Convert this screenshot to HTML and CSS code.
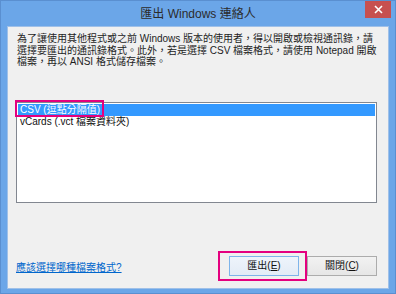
FILE: index.html
```html
<!DOCTYPE html>
<html lang="zh-Hant">
<head>
<meta charset="utf-8">
<title>匯出 Windows 連絡人</title>
<link rel="stylesheet" href="styles.css">
</head>
<body>
<div class="window">
  <div class="titlebar">
    <span class="spacer"></span>
    <span class="title">匯出 Windows 連絡人</span>
    <span class="close-btn"><svg width="9" height="9" viewBox="0 0 9 9"><path d="M1 1 L8 8 M8 1 L1 8" stroke="#fff" stroke-width="1.6" fill="none"/></svg></span>
  </div>
  <div class="client">
    <div class="desc">
      <div class="line">為了讓使用其他程式或之前 Windows 版本的使用者，得以開啟或檢視通訊錄，請</div>
      <div class="line">選擇要匯出的通訊錄格式。此外，若是選擇 CSV 檔案格式，請使用 Notepad 開啟</div>
      <div class="line">檔案，再以 ANSI 格式儲存檔案。</div>
    </div>
    <div class="listbox">
      <div class="item selected">CSV (逗點分隔值)</div>
      <div class="item">vCards (.vct 檔案資料夾)</div>
      <span class="highlight-list"></span>
    </div>
    <div class="footer">
      <a class="help-link" href="#">應該選擇哪種檔案格式?</a>
      <div class="highlight-btn">
        <button class="btn default">匯出(<u>E</u>)</button>
      </div>
      <button class="btn">關閉(<u>C</u>)</button>
    </div>
  </div>
</div>
</body>
</html>
```
FILE: styles.css
```css
* { box-sizing: border-box; }
html, body { margin: 0; padding: 0; }
body {
  width: 396px;
  height: 294px;
  overflow: hidden;
  font-family: "Liberation Sans", "Noto Sans CJK TC", sans-serif;
}
.window {
  width: 396px;
  height: 294px;
  background: #6ba6e8;
  border: 1px solid #5a8fd0;
  display: flex;
  flex-direction: column;
  padding: 0 6px 4px 6px;
}
.titlebar {
  height: 25px;
  display: grid;
  grid-template-columns: 1fr auto 1fr;
  align-items: start;
  margin: 0 -6px;
}
.title {
  font-size: 12px;
  line-height: 14px;
  color: #2b2b2b;
  margin-top: 6px;
  white-space: nowrap;
}
.close-btn {
  justify-self: end;
  width: 26px;
  height: 17px;
  margin-right: 4px;
  background: #c75050;
  display: flex;
  align-items: center;
  justify-content: center;
}
.close-btn svg { display: block; }
.client {
  flex: 1;
  background: #f0f0f0;
  border: 1px solid #9fc0e8;
  display: flex;
  flex-direction: column;
  padding: 0 11px 7px 8px;
}
.desc {
  margin: 6px 0 0 1px;
  color: #1e1e1e;
}
.line {
  height: 11.5px;
  font-size: 10px;
  line-height: 11.5px;
  white-space: nowrap;
}
.listbox {
  position: relative;
  margin-top: 34px;
  height: 101px;
  background: #fff;
  border: 1px solid #828790;
  padding: 1px;
}
.item {
  height: 12px;
  font-size: 10px;
  line-height: 12px;
  padding-left: 2px;
  color: #111;
  white-space: nowrap;
}
.item.selected {
  background: #3399ff;
  color: #fff;
}
.highlight-list {
  position: absolute;
  left: -2px;
  top: -3px;
  width: 89px;
  height: 17px;
  border: 2px solid #e4007f;
}
.footer {
  margin-top: auto;
  display: flex;
  align-items: center;
}
.help-link {
  flex: 1;
  font-size: 10px;
  line-height: 12px;
  color: #0066cc;
  text-decoration: underline;
  white-space: nowrap;
  margin-top: 3px;
}
.highlight-btn {
  border: 2px solid #e4007f;
  padding: 3px 6px 3px 9px;
}
.btn {
  width: 70px;
  height: 20px;
  margin: 0;
  padding: 0;
  display: block;
  font-family: inherit;
  font-size: 10px;
  line-height: 18px;
  color: #111;
  background: linear-gradient(#f2f2f2, #e6e6e6);
  border: 1px solid #acacac;
}
.btn u { text-decoration: underline; }
.btn.default {
  border-color: #7eb4ea;
  background: linear-gradient(#eef4fb, #e3ecf6);
}
```
